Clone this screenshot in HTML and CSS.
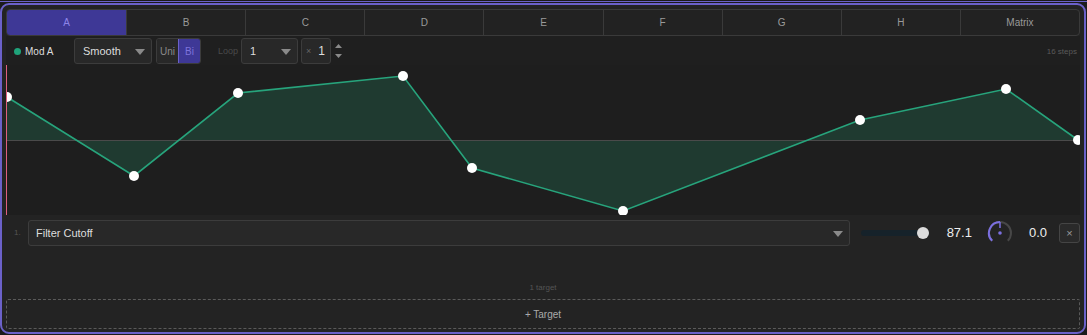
FILE: index.html
```html
<!DOCTYPE html>
<html lang="en">
<head>
  <meta charset="UTF-8" />
  <meta name="viewport" content="width=device-width, initial-scale=1.0" />
  <title>Modulation - LFO</title>
  <link rel="stylesheet" href="styles.css">
</head>
<body>
  <div class="top-line"></div>
  <div class="panel">
    <div class="tabs">
      <div class="tab active">A</div>
      <div class="tab">B</div>
      <div class="tab">C</div>
      <div class="tab">D</div>
      <div class="tab">E</div>
      <div class="tab">F</div>
      <div class="tab">G</div>
      <div class="tab">H</div>
      <div class="tab">Matrix</div>
    </div>

    <div class="controls">
      <div class="mod-name"><span class="dot"></span>Mod A</div>
      <div class="select select-shape">Smooth<span class="arrow"></span></div>
      <div class="segmented">
        <span class="seg">Uni</span>
        <span class="seg on">Bi</span>
      </div>
      <span class="loop-label">Loop</span>
      <div class="select select-loop">1<span class="arrow"></span></div>
      <div class="mult"><span class="times">&times;</span>1</div>
      <div class="spinner">
        <svg width="9" height="18" viewBox="0 0 9 18">
          <path d="M1 6 L4.5 2 L8 6 Z" fill="#8a8a8a" />
          <path d="M1 12 L4.5 16 L8 12 Z" fill="#8a8a8a" />
        </svg>
      </div>
      <span class="steps">16 steps</span>
    </div>

    <div class="graph">
      <svg class="graph-svg" width="1074" height="150" viewBox="0 0 1074 150">
        <polygon
          points="1,75 1,32 128,111 232,28 397,11 466,103 617,146 854,55 1000,24 1072,75"
          fill="#1f3a30" />
        <line x1="0" y1="75.5" x2="1074" y2="75.5" stroke="#4a4a4a" stroke-width="1" />
        <polyline
          points="1,32 128,111 232,28 397,11 466,103 617,146 854,55 1000,24 1072,75"
          fill="none" stroke="#27a47c" stroke-width="1.6" />
        <g fill="#ffffff">
          <circle cx="1" cy="32" r="5" />
          <circle cx="128" cy="111" r="5" />
          <circle cx="232" cy="28" r="5" />
          <circle cx="397" cy="11" r="5" />
          <circle cx="466" cy="103" r="5" />
          <circle cx="617" cy="146" r="5" />
          <circle cx="854" cy="55" r="5" />
          <circle cx="1000" cy="24" r="5" />
          <circle cx="1072" cy="75" r="5" />
        </g>
        <line x1="0.5" y1="0" x2="0.5" y2="150" stroke="#e0607e" stroke-width="1" />
      </svg>
    </div>

    <div class="target-row">
      <span class="index">1.</span>
      <div class="select select-target">Filter Cutoff<span class="arrow"></span></div>
      <div class="slider">
        <div class="track"></div>
        <div class="thumb"></div>
      </div>
      <span class="value">87.1</span>
      <svg class="knob" width="28" height="28" viewBox="0 0 28 28">
        <path d="M6.2 21.8 A11 11 0 1 1 21.8 21.8" fill="none" stroke="#474747" stroke-width="2" />
        <path d="M6.2 21.8 A11 11 0 0 1 14 3" fill="none" stroke="#7b6fe0" stroke-width="2" />
        <line x1="14" y1="3" x2="14" y2="9" stroke="#7b6fe0" stroke-width="1.5" />
        <circle cx="14" cy="14" r="1.8" fill="#7b6fe0" />
      </svg>
      <span class="value">0.0</span>
      <button class="remove">&times;</button>
    </div>

    <div class="target-count">1 target</div>
    <div class="add-target">+ Target</div>
  </div>
</body>
</html>
```

FILE: styles.css
```css
body {
  font-family: "Liberation Sans", Arial, sans-serif;
  margin: 0;
  background-color: #1b1b1b;
  color: #ddd;
  width: 1087px;
  height: 335px;
  overflow: hidden;
}
.top-line {
  height: 1px;
  margin-top: 1px;
  background: #6b61c9;
}
.panel {
  box-sizing: border-box;
  width: 1086px;
  height: 331px;
  margin: 1px 0 0 0;
  border: 2px solid #6b61c9;
  border-radius: 9px;
  background: #232323;
  padding: 4px 4px 0 4px;
}
.tabs {
  display: grid;
  grid-template-columns: repeat(9, 1fr);
  width: 1074px;
  height: 27px;
  border: 1px solid #3a3a3a;
  border-radius: 4px;
  box-sizing: border-box;
  overflow: hidden;
  background: #222;
}
.tab {
  display: flex;
  align-items: center;
  justify-content: center;
  font-size: 10px;
  color: #9a9a9a;
  border-left: 1px solid #3a3a3a;
}
.tab:first-child {
  border-left: none;
}
.tab.active {
  background: #3e3896;
  color: #8d84e8;
}
.controls {
  display: flex;
  align-items: center;
  height: 29px;
  width: 1074px;
  background: #1f1f1f;
  padding-left: 8px;
  padding-top: 1px;
  box-sizing: border-box;
}
.mod-name {
  display: flex;
  align-items: center;
  font-size: 10px;
  color: #ddd;
  width: 60px;
}
.dot {
  width: 7px;
  height: 7px;
  border-radius: 50%;
  background: #1fa37a;
  margin-right: 4px;
}
.select {
  position: relative;
  box-sizing: border-box;
  height: 26px;
  display: flex;
  align-items: center;
  padding-left: 8px;
  background: #282828;
  border: 1px solid #3c3c3c;
  border-radius: 3px;
  font-size: 11px;
  color: #ddd;
}
.arrow {
  position: absolute;
  right: 6px;
  top: 10px;
  width: 0;
  height: 0;
  border-left: 5px solid transparent;
  border-right: 5px solid transparent;
  border-top: 6px solid #8a8a8a;
}
.select-shape {
  width: 78px;
}
.segmented {
  display: flex;
  height: 26px;
  margin-left: 4px;
  border: 1px solid #3c3c3c;
  border-radius: 3px;
  box-sizing: border-box;
  overflow: hidden;
}
.seg {
  display: flex;
  align-items: center;
  justify-content: center;
  width: 21px;
  font-size: 10px;
  color: #8a8a8a;
  background: #282828;
}
.seg.on {
  background: #3e3896;
  color: #7d73dc;
  border-left: 1px solid #6b61c9;
}
.loop-label {
  font-size: 9px;
  color: #4a4a4a;
  margin-left: 17px;
  width: 23px;
}
.select-loop {
  width: 57px;
}
.mult {
  box-sizing: border-box;
  height: 26px;
  width: 30px;
  margin-left: 3px;
  display: flex;
  align-items: center;
  padding-left: 4px;
  background: #282828;
  border: 1px solid #3c3c3c;
  border-radius: 3px;
  font-size: 12px;
  color: #ddd;
}
.times {
  font-size: 9px;
  color: #666;
  margin-right: 7px;
}
.spinner {
  display: flex;
  margin-left: 3px;
}
.steps {
  margin-left: auto;
  margin-right: 3px;
  font-size: 8px;
  color: #5a5a5a;
}
.graph {
  width: 1074px;
  height: 150px;
  background: #1e1e1e;
  overflow: hidden;
}
.graph-svg {
  display: block;
}
.target-row {
  display: flex;
  align-items: center;
  height: 35px;
  width: 1074px;
  padding: 0 0 0 8px;
  box-sizing: border-box;
}
.index {
  font-size: 8px;
  color: #555;
  width: 14px;
}
.select-target {
  width: 822px;
  height: 26px;
  padding-left: 7px;
}
.slider {
  position: relative;
  width: 68px;
  height: 14px;
  margin-left: 11px;
  display: flex;
  align-items: center;
}
.track {
  width: 100%;
  height: 6px;
  border-radius: 3px;
  background: #16222a;
}
.thumb {
  position: absolute;
  right: 0;
  top: 1px;
  width: 12px;
  height: 12px;
  border-radius: 50%;
  background: #dcdcdc;
}
.value {
  font-size: 13px;
  color: #eee;
  margin-left: 18px;
}
.knob {
  margin-left: 14px;
  margin-right: -3px;
}
.value + .remove {
  margin-left: 12px;
}
.remove {
  box-sizing: border-box;
  width: 21px;
  height: 20px;
  padding: 0;
  background: #2a2a2a;
  border: 1px solid #454545;
  border-radius: 3px;
  color: #999;
  font-size: 11px;
  font-family: inherit;
}
.target-count {
  text-align: center;
  font-size: 8px;
  color: #555;
  margin-top: 33px;
  width: 1074px;
}
.add-target {
  display: flex;
  align-items: center;
  justify-content: center;
  width: 1074px;
  height: 30px;
  margin-top: 7px;
  box-sizing: border-box;
  border: 1px dashed #5a5a5a;
  border-radius: 2px;
  font-size: 10px;
  color: #aaa;
}
```
